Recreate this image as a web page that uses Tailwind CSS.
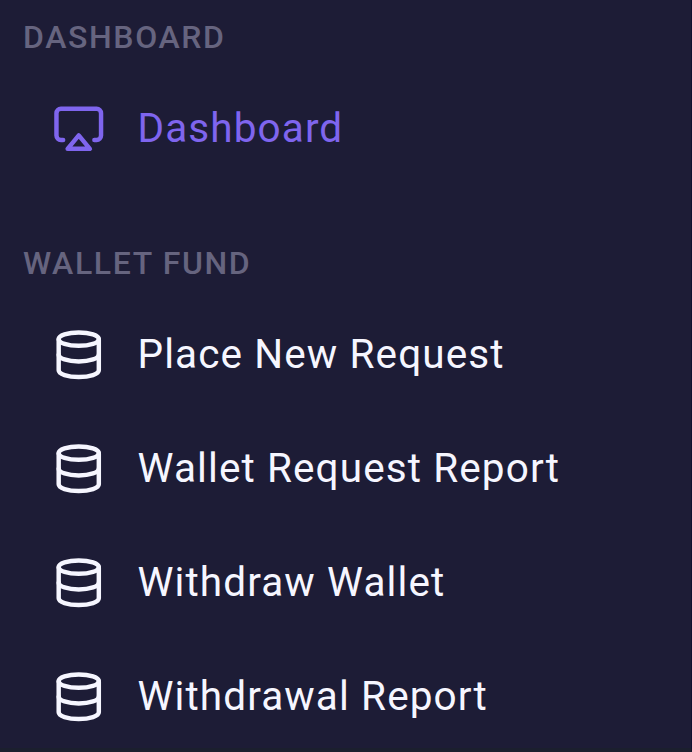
<!DOCTYPE html>
<html lang="en">
<head>
<meta charset="utf-8">
<title>Sidebar</title>
<script src="https://cdn.jsdelivr.net/npm/@tailwindcss/browser@4"></script>
</head>
<body class="bg-[#1d1c36]">
<svg class="hidden">
  <symbol id="airplay" viewBox="0 0 24 24"><path d="M5 17H4a2 2 0 0 1-2-2V5a2 2 0 0 1 2-2h16a2 2 0 0 1 2 2v10a2 2 0 0 1-2 2h-1"/><polygon points="12 15 17 21 7 21 12 15"/></symbol>
  <symbol id="database" viewBox="0 0 24 24"><ellipse cx="12" cy="5" rx="9" ry="3"/><path d="M21 12c0 1.66-4 3-9 3s-9-1.34-9-3"/><path d="M3 5v14c0 1.66 4 3 9 3s9-1.34 9-3V5"/></symbol>
</svg>
<nav class="flex h-[752px] w-[692px] flex-col overflow-hidden border-r border-b-4 border-r-[#0f1030] border-b-[#1b1f2e] font-['Roboto',sans-serif] text-[40.5px] leading-[52px] tracking-[1.1px] text-[#f6f6ff]">
  <h2 class="pt-[17px] pl-[23px] text-[32px] leading-10 font-medium tracking-[1.62px] text-[#66647f]">DASHBOARD</h2>
  <a class="mt-[45px] flex items-center gap-[32.5px] pl-[51.5px] text-[#7f65ee]"><svg class="size-[53.5px] fill-none stroke-current stroke-2 [stroke-linecap:round] [stroke-linejoin:round]"><use href="#airplay"/></svg><span class="pb-0.5">Dashboard</span></a>
  <h2 class="mt-[86.6px] pl-[23px] text-[32px] leading-10 font-medium tracking-[1.62px] text-[#66647f]">WALLET FUND</h2>
  <ul class="mt-[45px] flex flex-col gap-[60.1px]">
    <li class="flex items-center gap-[32.5px] pl-[51.5px]"><svg class="size-[53.5px] fill-none stroke-current stroke-2 [stroke-linecap:round] [stroke-linejoin:round]"><use href="#database"/></svg><span class="pb-0.5">Place New Request</span></li>
    <li class="flex items-center gap-[32.5px] pl-[51.5px]"><svg class="size-[53.5px] fill-none stroke-current stroke-2 [stroke-linecap:round] [stroke-linejoin:round]"><use href="#database"/></svg><span class="pb-0.5">Wallet Request Report</span></li>
    <li class="flex items-center gap-[32.5px] pl-[51.5px]"><svg class="size-[53.5px] fill-none stroke-current stroke-2 [stroke-linecap:round] [stroke-linejoin:round]"><use href="#database"/></svg><span class="pb-0.5">Withdraw Wallet</span></li>
    <li class="flex items-center gap-[32.5px] pl-[51.5px]"><svg class="size-[53.5px] fill-none stroke-current stroke-2 [stroke-linecap:round] [stroke-linejoin:round]"><use href="#database"/></svg><span class="pb-0.5">Withdrawal Report</span></li>
  </ul>
</nav>
</body>
</html>
